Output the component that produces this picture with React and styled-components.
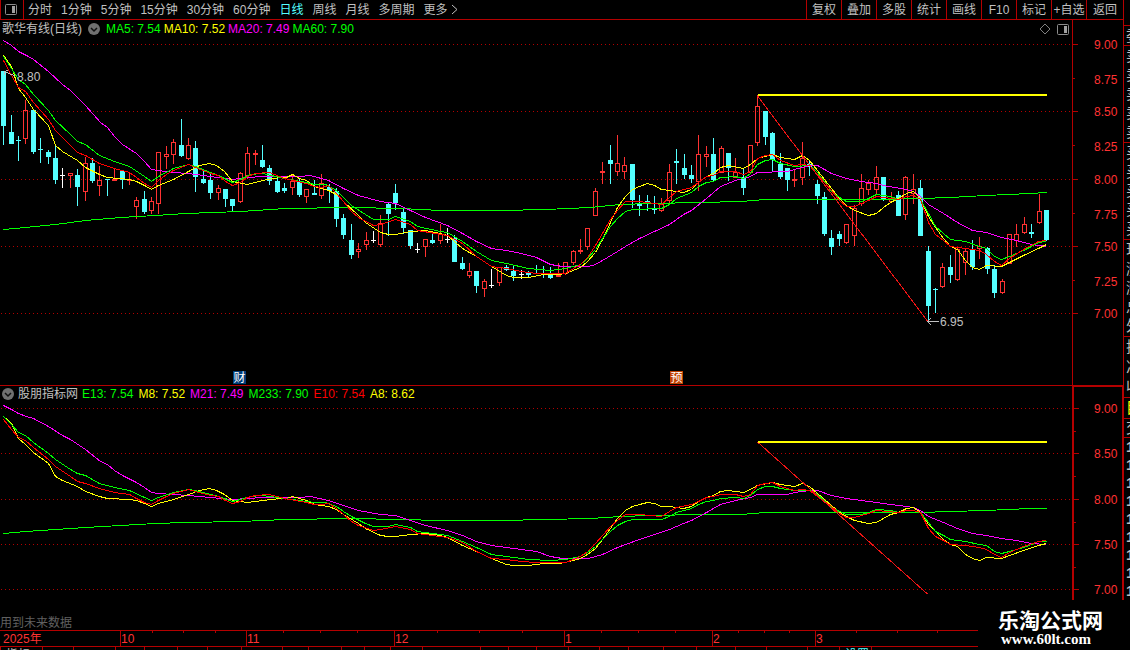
import React, { useState } from "react";

import styled, { createGlobalStyle } from "styled-components";

const GlobalStyle = createGlobalStyle`
  * { box-sizing: border-box; }
  body {
    margin: 0;
    background: #000;
    color: #c0c0c0;
    font-family: "Liberation Sans", "Noto Sans CJK SC", sans-serif;
    font-size: 12px;
    line-height: 16px;
    overflow: hidden;
  }
`

const LINE = '#b40000';
const RED = '#ff3232';
const CYAN = '#54ffff';
const GREEN = '#00ff00';
const YELLOW = '#ffff00';
const MAGENTA = '#ff00ff';

const Page = styled.div`
  display: grid;
  grid-template-columns: minmax(0, 1fr) 6px;
  height: 100vh;
  overflow: hidden;
  position: relative;
`

const Main = styled.main`
  border-right: 1px solid ${LINE};
  min-width: 0;
`

const Toolbar = styled.nav`
  display: flex;
  justify-content: space-between;
  height: 20px;
  border-bottom: 1px solid ${LINE};
  border-left: 1px solid ${LINE};
`

const ToolGroup = styled.div`
  display: flex;
`

const Periods = styled.div`
  display: flex;
  align-items: center;
  gap: 9px;
  padding-left: 4px;
`

const PlainButton = styled.button`
  display: flex;
  align-items: center;
  border: 0;
  padding: 0;
  background: none;
  color: ${p => (p.$active ? CYAN : 'inherit')};
  font: inherit;
  white-space: nowrap;
  cursor: pointer;
`

const LayoutButton = styled(PlainButton)`
  width: 23px;
  padding-left: 4px;
  border-right: 1px solid ${LINE};
`

const ToolButton = styled(PlainButton)`
  width: 35px;
  justify-content: center;
  border-left: 1px solid ${LINE};
`

const BackButton = styled(ToolButton)`
  width: 37px;
`

const Pane = styled.section`
  display: grid;
  grid-template-columns: minmax(0, 1fr) 51px;
  border-bottom: ${p => (p.$divided ? `1px solid ${LINE}` : '0')};
`

const PaneHeader = styled.header`
  display: flex;
  align-items: center;
  height: ${p => p.$height}px;
  padding: 0 2px;
  gap: ${p => p.$gap}px;
  white-space: nowrap;
`

const Title = styled.h2`
  margin: 0;
  font-size: 12px;
  font-weight: normal;
`

const Legend = styled.div`
  display: flex;
  flex: 1;
  gap: ${p => p.$gap}px;
`

const LegendItem = styled.span`
  color: ${p => p.$color};
`

const HeaderTools = styled.div`
  display: flex;
  gap: 6px;
`

const Chart = styled.svg`
  display: block;
  width: 100%;
  height: ${p => p.$height}px;
  font-size: 12px;
`

const Axis = styled.svg`
  display: block;
  width: 51px;
  height: ${p => p.$height}px;
  font-size: 12px;
  overflow: visible;
`

const Footnote = styled.p`
  margin: 0;
  height: 17px;
  padding-top: 2px;
  line-height: 17px;
  color: #606060;
`

const Tabs = styled.div`
  display: grid;
  grid-template-columns: ${p => p.$sizes.map(s => `minmax(0, ${s}fr)`).join(' ')};
  height: 3px;
  overflow: hidden;
`

const Tab = styled.span`
  border-left: 1px solid ${LINE};
  padding-left: 5px;
  height: 16px;
  color: ${p => (p.$active ? CYAN : 'inherit')};
  white-space: nowrap;
`

const Quotes = styled.aside`
  padding-top: 25px;
  overflow: hidden;
`

const QuoteGroup = styled.div`
  display: flex;
  flex-direction: column;
  height: ${p => p.$height}px;
  border-top: 1px solid ${LINE};
  color: ${p => p.$color || 'inherit'};
`

const QuoteRow = styled.span`
  flex: 1;
  display: flex;
  align-items: center;
  padding-left: 2px;
  font-size: 15px;
  font-weight: ${p => (p.$bold ? 'bold' : 'normal')};
  white-space: nowrap;
`

const Watermark = styled.a`
  position: absolute;
  right: 0;
  bottom: 0;
  width: 152px;
  height: 50px;
  padding: 8px 0 0 20px;
  background: #000;
  color: #fff;
  text-decoration: none;
`

const WatermarkName = styled.strong`
  display: block;
  font: bold 21px/22px "Noto Sans CJK SC", sans-serif;
`

const WatermarkUrl = styled.span`
  display: block;
  padding-left: 3px;
  font: bold 15px/18px "Liberation Serif", serif;
`

const periods = [
  '分时', '1分钟', '5分钟', '15分钟', '30分钟', '60分钟',
  '日线', '周线', '月线', '多周期',
];

const tools = ['复权', '叠加', '多股', '统计', '画线', 'F10', '标记', '+自选'];

const priceLegend = [
  ['MA5: 7.54', GREEN],
  ['MA10: 7.52', YELLOW],
  ['MA20: 7.49', MAGENTA],
  ['MA60: 7.90', GREEN],
];

const indicatorLegend = [
  ['E13: 7.54', GREEN],
  ['M8: 7.52', YELLOW],
  ['M21: 7.49', MAGENTA],
  ['M233: 7.90', GREEN],
  ['E10: 7.54', '#ff0000'],
  ['A8: 8.62', YELLOW],
];

// kind, high, body top, body bottom, low
// c = falling, r = rising, w = unchanged
const candles = `
c 71 71 126 145|c 115 132 144 144|c 136 140 141 161|r 100 110 139 144|c 110 110 152 154
c 138 149 150 163|c 150 152 157 164|c 145 158 180 184|w 168 175 176 188|r 173 173 176 188
c 169 175 187 206|r 157 163 192 201|c 158 163 181 183|r 166 180 186 196|c 179 179 180 196
r 169 179 181 181|c 171 171 180 189|r 172 179 181 185|r 197 200 207 219|c 191 199 212 214
r 197 201 211 214|r 152 152 204 214|r 146 154 157 169|r 139 142 155 164|c 119 145 156 157
r 138 145 159 160|c 141 148 177 192|c 171 179 183 184|c 173 180 193 199|r 185 188 193 200
c 189 189 199 207|c 199 199 206 211|r 172 173 202 203|r 147 153 176 179|r 150 153 155 165
c 145 160 167 168|c 165 168 181 185|c 178 181 192 193|c 183 188 191 193|r 174 181 188 195
c 179 181 195 197|r 189 189 197 203|c 180 193 195 195|r 174 183 196 199|c 184 187 191 203
c 188 191 219 227|c 214 218 235 239|c 224 240 255 259|r 243 249 252 258|r 232 240 245 250
w 231 240 241 243|r 215 223 245 247|c 202 204 214 236|c 184 193 203 210|c 209 212 228 234
c 230 230 246 249|w 243 249 250 253|r 239 239 247 257|c 234 240 243 244|r 224 234 241 244
w 228 239 240 243|c 235 238 262 262|c 257 263 269 270|r 263 271 276 278|c 271 271 286 293
r 279 281 289 297|w 269 285 286 288|r 267 267 283 286|c 265 267 270 271|c 266 271 276 281
w 270 274 275 279|c 271 273 275 277|c 265 273 274 274|c 266 274 275 278|c 267 275 278 279
r 263 275 277 277|r 262 262 274 275|r 250 251 263 265|r 239 250 252 254|r 228 228 247 250
r 188 191 216 216|r 162 171 173 184|c 145 160 164 184|r 135 163 172 176|r 157 165 172 179
c 164 164 200 208|c 195 203 206 216|c 195 201 203 211|c 196 208 210 214|r 198 204 211 212
r 164 172 201 203|c 149 161 163 184|c 154 168 175 179|c 165 175 179 183|r 135 154 182 191
r 146 154 157 167|c 138 154 180 181|r 146 148 173 173|c 153 153 168 181|r 158 172 178 178
c 168 177 188 195|r 145 145 173 174|r 95 106 143 146|c 111 111 137 145|c 132 133 160 171
c 153 164 177 179|c 168 168 180 191|r 170 179 181 187|r 142 158 178 185|c 160 164 167 176
c 180 184 196 204|c 192 197 234 236|c 230 238 247 255|c 231 234 239 246|r 224 224 243 244
r 205 208 236 246|r 174 188 204 206|r 180 183 190 195|r 166 177 190 194|c 177 177 200 201
r 192 199 202 203|c 191 195 216 216|r 176 177 215 220|r 174 189 194 204|c 180 188 236 236
c 246 251 306 321|c 288 289 290 313|r 263 267 287 288|c 255 267 275 283|r 247 249 280 281
r 248 251 263 275|c 240 250 267 270|r 237 246 249 259|c 247 248 269 274|c 265 269 293 298
r 279 281 293 294|r 234 234 264 264|r 224 234 241 247|r 217 224 233 234|c 224 232 234 238
r 194 211 223 224|c 210 210 240 241`
  .trim().split(/[|\n]/).map(row => {
    const [kind, ...v] = row.split(' ');
    return [kind, ...v.map(Number)];
  });

const averages = [
  {
    color: GREEN,
    points: '3,229 25,227 55,224 85,220 120,217 155,215 185,213 240,211 285,208 350,207 400,208 440,210 500,210 545,209 590,207 620,204 650,203 700,202 740,201 765,199 870,199 920,198 950,197 985,195 1030,193 1046,192',
  },
  {
    color: MAGENTA,
    points: '3,40 11,45 18,51 26,55 33,59 48,71 62,84 70,90 85,105 100,122 107,127 114,136 122,144 136,153 144,161 151,169 158,170 173,172 188,173 210,176 232,179 248,177 262,176 300,176 310,175 328,180 343,188 358,195 380,201 395,203 410,210 425,217 447,225 462,233 476,241 491,248 506,250 521,253 536,257 550,264 562,266 588,266 595,264 602,260 617,251 625,246 639,238 654,231 669,224 683,214 691,210 706,198 720,186 735,180 750,176 757,172 787,171 794,169 809,165 817,165 831,173 846,178 861,181 876,183 883,185 906,189 913,191 920,196 928,204 943,213 957,222 972,230 986,232 1001,237 1016,240 1031,244 1046,246',
  },
  {
    color: YELLOW,
    points: '3,55 11,66 18,88 25,97 33,109 48,125 55,145 62,151 77,160 85,167 99,174 107,177 129,179 136,181 144,185 151,189 158,185 173,179 188,171 199,165 209,163 216,165 224,171 232,181 247,184 262,180 280,177 286,177 292,174 299,178 306,180 314,186 328,190 336,194 343,201 358,215 365,222 380,232 388,234 395,234 410,231 425,230 440,233 447,235 462,248 476,256 491,266 506,275 513,277 528,277 543,274 558,274 565,273 580,267 587,261 595,252 602,239 610,222 617,207 625,196 632,189 639,186 647,183 654,185 661,189 669,190 683,192 691,189 698,182 706,176 713,173 720,167 728,165 743,168 750,164 757,158 772,154 780,157 794,159 802,155 809,160 817,170 824,179 831,188 839,198 846,205 854,210 868,215 876,213 883,207 890,202 898,198 906,193 913,191 920,198 928,216 935,227 943,238 950,246 957,249 965,260 972,267 979,269 986,265 1001,266 1009,262 1023,255 1038,248 1046,244',
  },
  {
    color: GREEN,
    points: '3,56 11,68 18,79 25,84 33,94 48,110 55,120 70,134 77,141 85,144 99,155 114,161 129,166 144,176 151,181 158,176 173,168 188,164 195,166 210,172 218,175 232,182 240,179 250,174 262,173 284,178 306,182 314,184 325,184 336,190 343,197 351,205 365,214 373,219 388,219 395,216 410,221 417,226 440,231 447,232 462,241 476,251 491,260 506,263 528,268 550,270 565,268 580,264 587,258 595,249 610,226 617,218 625,211 632,209 661,208 669,204 676,198 691,192 698,186 706,182 713,181 720,177 735,176 743,178 750,173 757,164 765,160 772,159 780,163 794,166 809,165 817,172 824,181 831,191 839,197 846,201 861,201 868,198 876,194 890,196 898,199 906,196 913,195 920,199 928,213 935,226 943,233 950,239 965,241 979,246 986,248 994,256 1001,259 1009,256 1023,250 1031,246 1038,242 1046,241',
  },
  {
    color: '#ff0000',
    points: '3,60 11,75 18,87 25,91 33,102 48,119 55,130 70,145 77,152 85,155 99,163 114,168 129,172 136,177 144,183 151,187 158,180 166,174 173,170 188,164 195,167 210,173 218,175 225,181 232,185 240,182 247,176 255,173 269,172 284,178 306,183 314,186 321,187 328,185 336,193 343,201 351,211 358,217 373,225 380,224 395,219 410,224 417,230 447,235 462,243 476,256 491,266 506,268 521,271 536,273 550,273 565,273 573,268 580,264 587,257 595,245 610,219 617,210 625,201 639,201 661,204 669,197 676,191 691,187 698,182 706,176 713,175 720,171 735,171 743,174 750,171 757,158 765,155 772,154 780,160 794,165 802,164 809,165 817,174 831,190 839,200 846,206 854,206 868,200 876,196 898,199 906,196 913,195 920,199 928,222 935,234 943,240 950,246 965,248 979,250 986,254 994,261 1001,265 1009,258 1023,249 1038,241 1046,240',
  },
].map(s => ({ ...s, points: s.points.split(' ').map(p => p.split(',').map(Number)) }));

const priceLabels = [
  ['9.00', 44], ['8.75', 78], ['8.50', 111], ['8.25', 145], ['8.00', 179],
  ['7.75', 213], ['7.50', 246], ['7.25', 280], ['7.00', 313],
];

const indicatorLabels = [
  ['9.00', 408], ['', 431], ['8.50', 453], ['', 476], ['8.00', 499],
  ['', 522], ['7.50', 544], ['', 567], ['7.00', 589],
];

const months = [['10', 120], ['11', 246], ['12', 394], ['1', 564], ['2', 712], ['3', 815]];
const weekTicks = [152, 183, 215, 283, 320, 357, 437, 479, 522, 601, 638, 675, 738, 764, 789, 856, 897, 937];

const tabSizes = [
  42, 31, 42, 29, 33, 30, 34, 41, 26, 33, 23, 26, 32, 58, 28, 28, 32, 31, 29,
  35, 33, 39, 31, 41, 32, 32, 252,
];

const quoteGroups = [
  { height: 20, rows: ['委'] },
  { height: 97, rows: ['卖五', '卖四', '卖三', '卖二', '卖一'] },
  { height: 97, rows: ['买一', '买二', '买三', '买四', '买五'] },
  { height: 97, rows: ['现价', '涨跌', '涨幅', '总量', '外盘'] },
  { height: 61, rows: ['换手', '净资', '收益'] },
  { height: 21, rows: ['目'], color: YELLOW },
  { height: 19, rows: ['交'] },
];

// The indicator pane has the same prices on a flatter scale.
const toIndicatorY = y => Math.round(499 + (y - 179) * 0.673);

const barX = i => Math.round(3.2 + 7.395 * i);

function PanelIcon() {
  return (
    <svg width="13" height="11" viewBox="0 0 13 11" aria-hidden="true">
      <rect x="0.5" y="0.5" width="11" height="10" rx="1" fill="none" stroke="#8c8c8c" />
      <rect x="7" y="2" width="3" height="7" fill="#a0a0a0" />
    </svg>
  );
}

function CollapseIcon() {
  return (
    <svg width="12" height="12" viewBox="0 0 12 12" aria-hidden="true">
      <circle cx="6" cy="6" r="6" fill="#707070" />
      <path d="M3 5 L6 8 L9 5" fill="none" stroke="#101010" strokeWidth="1.5" />
    </svg>
  );
}

function Candle({ x, data }) {
  const [kind, high, top, bottom, low] = data;
  const color = { c: CYAN, r: RED, w: '#ffffff' }[kind];
  const height = Math.max(bottom - top, 1);

  if (kind !== 'r' || height < 3) {
    return (
      <g fill={color}>
        <rect x={x} y={high} width="1" height={low - high} />
        <rect x={x - 2} y={top} width="5" height={height} />
      </g>
    );
  }
  return (
    <g fill={color}>
      <rect x={x} y={high} width="1" height={top - high} />
      <rect x={x} y={bottom} width="1" height={low - bottom} />
      <rect x={x - 1.5} y={top + 0.5} width="4" height={height - 1} fill="none" stroke={color} />
    </g>
  );
}

function GridLines({ labels }) {
  return labels.filter((l, i) => i % 2 === 0).map(([, y]) => (
    <line key={y} x1="1" x2="1072" y1={y + 0.5} y2={y + 0.5} stroke={LINE} strokeDasharray="1 3" />
  ));
}

function Averages({ scale = y => y }) {
  return averages.map((s, i) => (
    <polyline
      key={i}
      points={s.points.map(([x, y]) => `${x + 0.5},${scale(y) + 0.5}`).join(' ')}
      fill="none"
      stroke={s.color}
    />
  ));
}

function AxisLabels({ labels, x }) {
  return labels.map(([text, y], i) => (
    <g key={y} fill={RED}>
      <rect x={x} y={y} width={i % 2 ? 2 : 5} height="1" fill={LINE} />
      <text x="22" y={y + (i % 2 ? 6 : 5)}>{text}</text>
    </g>
  ));
}

function Marker({ x, text, color }) {
  return (
    <g>
      <rect x={x} y="371" width="13" height="13" fill={color} />
      <text x={x + 0.5} y="382" fill="#fff">{text}</text>
    </g>
  );
}

function PricePane() {
  return (
    <Pane $divided>
      <div>
        <PaneHeader $height={18} $gap={6}>
          <Title>歌华有线(日线)</Title>
          <PlainButton aria-label="收起主图"><CollapseIcon /></PlainButton>
          <Legend $gap={3}>
            {priceLegend.map(([text, color]) => <LegendItem key={text} $color={color}>{text}</LegendItem>)}
          </Legend>
          <HeaderTools>
            <PlainButton aria-label="标注">
              <svg width="12" height="12" viewBox="0 0 12 12" aria-hidden="true">
                <path d="M6 1 L11 6 L6 11 L1 6 Z" fill="none" stroke="#808080" />
              </svg>
            </PlainButton>
            <PlainButton aria-label="侧栏"><PanelIcon /></PlainButton>
          </HeaderTools>
        </PaneHeader>
        <Chart $height={347} viewBox="0 38 1072 347" preserveAspectRatio="none">
          <g shapeRendering="crispEdges">
            <GridLines labels={priceLabels} />
            {candles.map((c, i) => <Candle key={i} x={barX(i)} data={c} />)}
            <Averages />
            <line x1="757.5" y1="96" x2="927.5" y2="321" stroke="#f01414" />
            <rect x="758" y="94" width="289" height="2" fill={YELLOW} />
            <path d="M4.5 71.5 L15 76 M4.5 75 V71.5 L8 70.5" fill="none" stroke="#c0c0c0" />
            <path d="M939 321.5 H928 M931 318 L927.5 321.5 L931 325" fill="none" stroke="#c0c0c0" />
          </g>
          <text x="17" y="81" fill="#c0c0c0">8.80</text>
          <text x="940" y="326" fill="#c0c0c0">6.95</text>
          <Marker x={233} text="财" color="#003c78" />
          <Marker x={670} text="预" color="#c04000" />
        </Chart>
      </div>
      <Axis $height={365} viewBox="0 20 51 365">
        <rect x="0" y="20" width="1" height="366" fill={LINE} />
        <AxisLabels labels={priceLabels} x={1} />
      </Axis>
    </Pane>
  );
}

function IndicatorPane() {
  return (
    <Pane>
      <div>
        <PaneHeader $height={16} $gap={4}>
          <PlainButton aria-label="收起副图"><CollapseIcon /></PlainButton>
          <Title>股朋指标网</Title>
          <Legend $gap={5}>
            {indicatorLegend.map(([text, color]) => <LegendItem key={text} $color={color}>{text}</LegendItem>)}
          </Legend>
        </PaneHeader>
        <Chart $height={211} viewBox="0 402 1072 211" preserveAspectRatio="none">
          <g shapeRendering="crispEdges">
            <GridLines labels={indicatorLabels} />
            <Averages scale={toIndicatorY} />
            <line x1="757.5" y1="442" x2="927.5" y2="594" stroke="#f01414" />
            <rect x="758" y="441" width="289" height="2" fill={YELLOW} />
          </g>
        </Chart>
        <Footnote>用到未来数据</Footnote>
      </div>
      <Axis $height={244} viewBox="0 386 51 244">
        <g fill={LINE}>
          <rect x="0" y="385" width="52" height="2" />
          <rect x="0" y="385" width="2" height="245" />
          <rect x="50" y="385" width="2" height="245" />
        </g>
        <AxisLabels labels={indicatorLabels} x={2} />
      </Axis>
    </Pane>
  );
}

function DateAxis() {
  return (
    <Chart $height={17} viewBox="0 630 1123 17" preserveAspectRatio="none">
      <g fill={LINE}>
        <rect x="0" y="630" width="1123" height="1" />
        <rect x="0" y="646" width="1123" height="1" />
        {months.map(([m, x]) => <rect key={m} x={x} y="630" width="1" height="16" />)}
        {weekTicks.map(x => <rect key={x} x={x} y="631" width="1" height="2" />)}
      </g>
      <g fill={RED}>
        <text x="3" y="643">2025年</text>
        {months.map(([m, x]) => <text key={m} x={x + 1} y="643">{m}</text>)}
      </g>
    </Chart>
  );
}

export default function App() {
  const [period, setPeriod] = useState('日线');

  return (
    <Page>
      <GlobalStyle />
      <Main>
        <Toolbar>
          <ToolGroup>
            <LayoutButton aria-label="布局"><PanelIcon /></LayoutButton>
            <Periods>
              {periods.map(p => (
                <PlainButton key={p} $active={p === period} onClick={() => setPeriod(p)}>{p}</PlainButton>
              ))}
              <PlainButton>
                更多
                <svg width="12" height="11" viewBox="0 0 12 11" aria-hidden="true">
                  <path d="M4 1 L9 5.5 L4 10" fill="none" stroke="#c0c0c0" />
                </svg>
              </PlainButton>
            </Periods>
          </ToolGroup>
          <ToolGroup>
            {tools.map(text => <ToolButton key={text}>{text}</ToolButton>)}
            <BackButton>返回</BackButton>
          </ToolGroup>
        </Toolbar>
        <PricePane />
        <IndicatorPane />
        <DateAxis />
        <Tabs $sizes={tabSizes}>
          {tabSizes.map((size, i) => (
            <Tab key={i} $active={i === 25}>{{ 0: '指标', 25: '设置' }[i]}</Tab>
          ))}
        </Tabs>
      </Main>
      <Quotes>
        {quoteGroups.map(g => (
          <QuoteGroup key={g.rows[0]} $height={g.height} $color={g.color}>
            {g.rows.map(r => <QuoteRow key={r}>{r}</QuoteRow>)}
          </QuoteGroup>
        ))}
        <QuoteGroup $height={163}>
          {['14:51', '14:52', '14:53', '14:54', '14:55', '14:56', '14:57', '14:59', '15:00'].map(time => (
            <QuoteRow key={time} $bold>{time}</QuoteRow>
          ))}
        </QuoteGroup>
      </Quotes>
      <Watermark href="#">
        <WatermarkName>乐淘公式网</WatermarkName>
        <WatermarkUrl>www.60lt.com</WatermarkUrl>
      </Watermark>
    </Page>
  );
}
